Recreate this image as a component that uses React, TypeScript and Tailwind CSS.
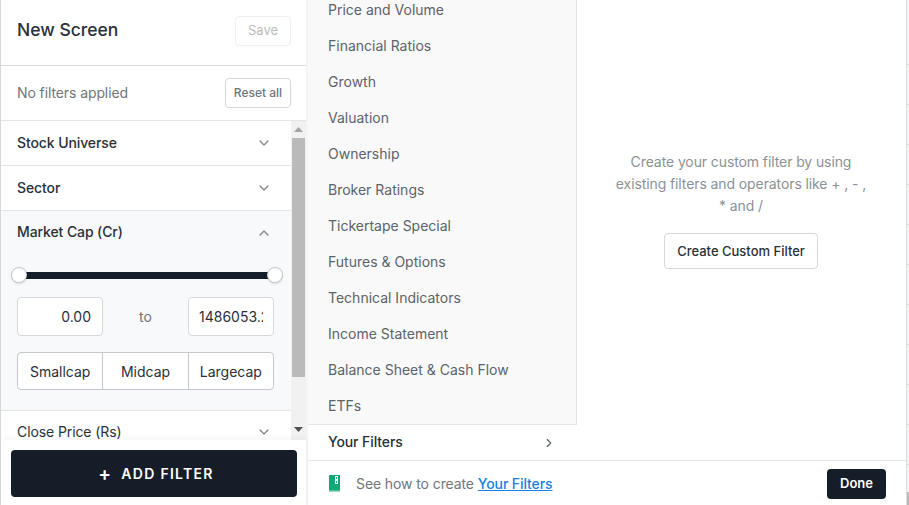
import React from 'react';
import { ChevronDown, ChevronUp, ChevronRight } from 'lucide-react';

const menuItems = [
  'Price and Volume',
  'Financial Ratios',
  'Growth',
  'Valuation',
  'Ownership',
  'Broker Ratings',
  'Tickertape Special',
  'Futures & Options',
  'Technical Indicators',
  'Income Statement',
  'Balance Sheet & Cash Flow',
  'ETFs',
];

const ticks = [0, 1, 2, 3, 4, 5, 6, 7, 8, 9, 10];

const FilterRow = ({ label }: { label: string }) => (
  <div className="h-[45px] shrink-0 flex items-center justify-between pl-4 pr-[19px] border-b border-[#e3e5e8] bg-white">
    <span className="text-[14px] font-medium tracking-[-0.1px] text-[#2a3038] pb-[2px]">{label}</span>
    <ChevronDown size={16} strokeWidth={2} className="text-[#81878c]" />
  </div>
);

const App = () => {
  return (
    <div className="w-[909px] h-[505px] flex overflow-hidden bg-[#f3f4f5] text-[#2a3038] font-['Inter',sans-serif]">
      {/* left panel */}
      <div className="w-[306px] shrink-0 flex flex-col bg-white border-l border-[#d5d8dc]">
        <div className="h-[66px] shrink-0 flex items-center justify-between pl-4 pr-[15px] border-b border-[#d9dbde]">
          <h1 className="text-[17.5px] font-medium text-[#2a3038] leading-none mb-[5px]">New Screen</h1>
          <button className="w-[56px] h-[30px] mb-[3px] border border-[#eef0f1] rounded text-[13px] text-[#b9bdc1]">Save</button>
        </div>
        <div className="h-[55px] shrink-0 flex items-center justify-between pl-4 pr-[15px] border-b border-[#e3e5e8]">
          <span className="text-[14px] tracking-[-0.1px] text-[#6f767c] pb-[2px]">No filters applied</span>
          <button className="w-[66px] h-[30px] border border-[#d5d8dc] rounded text-[12px] font-medium text-[#6f767c]">Reset all</button>
        </div>

        <div className="h-[319px] shrink-0 flex overflow-hidden">
          <div className="w-[290px] shrink-0 flex flex-col">
            <FilterRow label="Stock Universe" />
            <FilterRow label="Sector" />
            <div className="h-[200px] shrink-0 bg-[#f8f9fb] border-b border-[#e3e5e8] pl-4 pr-[17px]">
              <div className="h-[42px] flex items-center justify-between pr-[2px]">
                <span className="text-[14px] font-medium tracking-[-0.1px] text-[#2a3038] pb-[2px]">Market Cap (Cr)</span>
                <ChevronUp size={16} strokeWidth={2} className="text-[#81878c] mt-[2px]" />
              </div>
              <div className="relative h-[7px] mt-[19px] ml-[2px] -mr-[1px] bg-[#151e28]">
                <span className="absolute -left-[8px] -top-[5px] w-4 h-4 rounded-full bg-white border border-[#c4c8cc] shadow" />
                <span className="absolute -right-[8px] -top-[5px] w-4 h-4 rounded-full bg-white border border-[#c4c8cc] shadow" />
              </div>
              <div className="flex items-center justify-between mt-[18px]">
                <div className="w-[86px] h-[39px] bg-white border border-[#d5d8dc] rounded flex items-center justify-end pr-[11px] text-[14px] text-[#2a3038]">0.00</div>
                <span className="text-[14px] text-[#6f767c]">to</span>
                <div className="w-[86px] h-[39px] bg-white border border-[#d5d8dc] rounded flex items-center pl-[10px]">
                  <span className="w-[64px] overflow-hidden text-[14px] text-[#2a3038] whitespace-nowrap">1486053.2</span>
                </div>
              </div>
              <div className="flex mt-[16px] w-[257px] h-[38px] bg-white border border-[#c4c8cc] rounded text-[14px] text-[#2a3038]">
                <div className="flex-1 flex items-center justify-center border-r border-[#c4c8cc]">Smallcap</div>
                <div className="flex-1 flex items-center justify-center border-r border-[#c4c8cc]">Midcap</div>
                <div className="flex-1 flex items-center justify-center">Largecap</div>
              </div>
            </div>
            <div className="h-[40px] shrink-0 flex items-center justify-between pl-4 pr-[19px] bg-white">
              <span className="text-[14px] tracking-[-0.1px] text-[#2a3038]">Close Price (Rs)</span>
              <ChevronDown size={16} strokeWidth={2} className="text-[#81878c] mt-[2px]" />
            </div>
          </div>
          {/* scrollbar */}
          <div className="w-[15px] shrink-0 bg-[#f1f1f1] flex flex-col items-center">
            <svg width="9" height="5" viewBox="0 0 9 5" className="mt-[6px] shrink-0"><path d="M4.5 0L9 5H0z" fill="#a3a3a3" /></svg>
            <div className="w-[13px] h-[239px] mt-[6px] bg-[#bababa] shrink-0" />
            <svg width="9" height="5" viewBox="0 0 9 5" className="mt-[50px] shrink-0"><path d="M0 0H9L4.5 5z" fill="#505050" /></svg>
          </div>
        </div>

        <div className="flex-1 bg-white px-[10px] pt-[10px] shadow-[0_-2px_6px_rgba(0,0,0,0.04)] z-10">
          <button className="w-[286px] h-[47px] pl-[4px] bg-[#151e28] rounded flex items-center justify-center gap-[9px] text-white text-[14px] font-semibold tracking-[1.3px]">
            <span className="text-[19px] font-semibold leading-none">+</span>
            ADD FILTER
          </button>
        </div>
      </div>

      {/* modal */}
      <div className="w-[599px] ml-[2px] shrink-0 flex flex-col bg-white border-r border-[#d9dbde]">
        <div className="h-[461px] shrink-0 flex border-b border-[#e3e5e8] overflow-hidden">
          <div className="w-[269px] shrink-0 flex flex-col">
            <div className="h-[425px] shrink-0 bg-[#f9f9f9] border-r border-b border-[#e3e5e8] overflow-hidden">
              <div className="-mt-[9px]">
                {menuItems.map((m) => (
                  <div key={m} className="h-[36px] flex items-center pl-5 text-[14px] text-[#5c6369]">{m}</div>
                ))}
              </div>
            </div>
            <div className="flex-1 flex items-center justify-between pl-5 pr-[21px] bg-white">
              <span className="text-[14px] font-medium tracking-[-0.1px] text-[#2a3038] pb-[2px]">Your Filters</span>
              <ChevronRight size={14} strokeWidth={2} className="text-[#5c6369]" />
            </div>
          </div>
          <div className="flex-1 flex flex-col items-center pt-[151px] pr-[1px]">
            <p className="w-[256px] text-center text-[14px] tracking-[-0.1px] leading-[22px] text-[#8b9196]">
              Create your custom filter by using existing filters and operators like + , - , * and /
            </p>
            <button className="mt-[16px] w-[154px] h-[36px] pt-[2px] border border-[#d5d8dc] rounded text-[13px] font-medium text-[#2a3038]">Create Custom Filter</button>
          </div>
        </div>
        <div className="flex-1 flex items-center justify-between pl-[21px] pr-5">
          <div className="flex items-center">
            <svg width="11" height="17" viewBox="0 0 11 17" className="mr-[16px] mt-[1px]">
              <path d="M1 0H11V17H1C.4 17 0 16.6 0 16V1C0 .4.4 0 1 0z" fill="#12a777" />
              <rect x="0" y="15.5" width="11" height="1.5" fill="#9adcc4" />
              <rect x="6" y="1" width="3" height="8" fill="#ffffff" />
              <rect x="7" y="2" width="1" height="2" fill="#12a777" />
              <rect x="7" y="6" width="1" height="2" fill="#12a777" />
            </svg>
            <span className="text-[14px] tracking-[-0.1px] text-[#6f767c]">See how to create <a className="text-[#1a7fe0] font-medium underline">Your Filters</a></span>
          </div>
          <button className="w-[59px] h-[30px] mt-[1px] pt-[1px] bg-[#151e28] rounded text-white text-[13px] font-semibold">Done</button>
        </div>
      </div>

      {/* page behind the modal, right edge */}
      <div className="flex-1 flex flex-col pt-[25px]">
        {ticks.map((t) => (
          <div key={t} className="h-[40px] shrink-0 border-b border-[#dcdee0]" />
        ))}
        <div className="h-[13px] mt-[27px] shrink-0 bg-[#bababa]" />
      </div>
    </div>
  );
};

export default App;
